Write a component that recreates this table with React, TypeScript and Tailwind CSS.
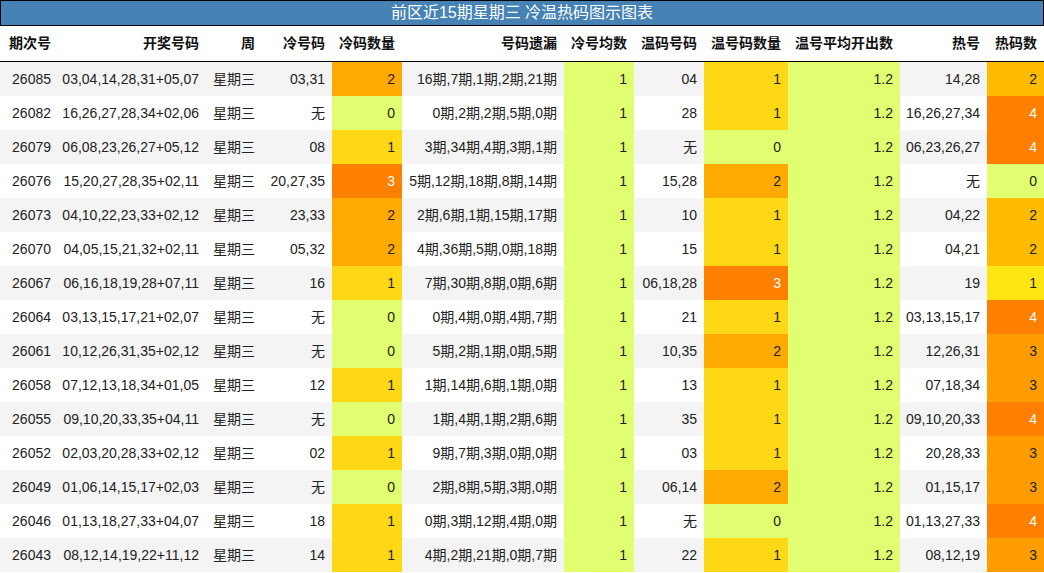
import React from "react";

type Row = [string, string, string, number, string, string, number, string, number];

const rows: Row[] = [
  ["26085", "03,04,14,28,31+05,07", "03,31", 2, "16期,7期,1期,2期,21期", "04", 1, "14,28", 2],
  ["26082", "16,26,27,28,34+02,06", "无", 0, "0期,2期,2期,5期,0期", "28", 1, "16,26,27,34", 4],
  ["26079", "06,08,23,26,27+05,12", "08", 1, "3期,34期,4期,3期,1期", "无", 0, "06,23,26,27", 4],
  ["26076", "15,20,27,28,35+02,11", "20,27,35", 3, "5期,12期,18期,8期,14期", "15,28", 2, "无", 0],
  ["26073", "04,10,22,23,33+02,12", "23,33", 2, "2期,6期,1期,15期,17期", "10", 1, "04,22", 2],
  ["26070", "04,05,15,21,32+02,11", "05,32", 2, "4期,36期,5期,0期,18期", "15", 1, "04,21", 2],
  ["26067", "06,16,18,19,28+07,11", "16", 1, "7期,30期,8期,0期,6期", "06,18,28", 3, "19", 1],
  ["26064", "03,13,15,17,21+02,07", "无", 0, "0期,4期,0期,4期,7期", "21", 1, "03,13,15,17", 4],
  ["26061", "10,12,26,31,35+02,12", "无", 0, "5期,2期,1期,0期,5期", "10,35", 2, "12,26,31", 3],
  ["26058", "07,12,13,18,34+01,05", "12", 1, "1期,14期,6期,1期,0期", "13", 1, "07,18,34", 3],
  ["26055", "09,10,20,33,35+04,11", "无", 0, "1期,4期,1期,2期,6期", "35", 1, "09,10,20,33", 4],
  ["26052", "02,03,20,28,33+02,12", "02", 1, "9期,7期,3期,0期,0期", "03", 1, "20,28,33", 3],
  ["26049", "01,06,14,15,17+02,03", "无", 0, "2期,8期,5期,3期,0期", "06,14", 2, "01,15,17", 3],
  ["26046", "01,13,18,27,33+04,07", "18", 1, "0期,3期,12期,4期,0期", "无", 0, "01,13,27,33", 4],
  ["26043", "08,12,14,19,22+11,12", "14", 1, "4期,2期,21期,0期,7期", "22", 1, "08,12,19", 3],
];

const countCls: Record<number, string> = {
  0: "bg-[#e0fe70] text-[#222]",
  1: "bg-[#fed815] text-[#222]",
  2: "bg-[#ffaa00] text-[#222]",
  3: "bg-[#ff8000] text-white",
};

const hotCls: Record<number, string> = {
  0: "bg-[#e0fe70] text-[#222]",
  1: "bg-[#fee615] text-[#222]",
  2: "bg-[#ffbb00] text-[#222]",
  3: "bg-[#ff9d00] text-[#222]",
  4: "bg-[#ff8000] text-white",
};

const headers = [
  "期次号",
  "开奖号码",
  "周",
  "冷号码",
  "冷码数量",
  "号码遗漏",
  "冷号均数",
  "温码号码",
  "温号码数量",
  "温号平均开出数",
  "热号",
  "热码数",
];

const grid =
  "grid grid-cols-[58px_148px_56px_70px_70px_162px_70px_70px_84px_112px_87px_57px]";

function Cell({ children, cls = "" }: { children: React.ReactNode; cls?: string }) {
  return (
    <div className={`h-[34px] flex items-center justify-end pr-[7px] whitespace-nowrap ${cls}`}>
      {children}
    </div>
  );
}

export default function App() {
  return (
    <div
      className="w-[1044px] h-[573px] bg-white text-[14px] text-[#222] overflow-hidden"
      style={{ fontFamily: '"Liberation Sans", Arial, "Noto Sans CJK SC", sans-serif' }}
    >
      <div className="h-[26px] border border-black bg-[#4682b4] text-white text-[16px] flex items-center justify-center leading-none">
        前区近15期星期三 冷温热码图示图表
      </div>
      <div className={`${grid} h-[36px] border-b border-black font-bold text-[#111]`}>
        {headers.map((h) => (
          <div key={h} className="flex items-center justify-end pr-[7px] whitespace-nowrap">
            {h}
          </div>
        ))}
      </div>
      {rows.map((r, i) => {
        const bg = i % 2 === 0 ? "bg-[#f4f4f4]" : "bg-white";
        return (
          <div key={r[0]} className={`${grid} ${bg}`}>
            <Cell>{r[0]}</Cell>
            <Cell>{r[1]}</Cell>
            <Cell>星期三</Cell>
            <Cell>{r[2]}</Cell>
            <Cell cls={countCls[r[3]]}>{r[3]}</Cell>
            <Cell>{r[4]}</Cell>
            <Cell cls="bg-[#e0fe70]">1</Cell>
            <Cell>{r[5]}</Cell>
            <Cell cls={countCls[r[6]]}>{r[6]}</Cell>
            <Cell cls="bg-[#e0fe70]">1.2</Cell>
            <Cell>{r[7]}</Cell>
            <Cell cls={hotCls[r[8]]}>{r[8]}</Cell>
          </div>
        );
      })}
    </div>
  );
}
